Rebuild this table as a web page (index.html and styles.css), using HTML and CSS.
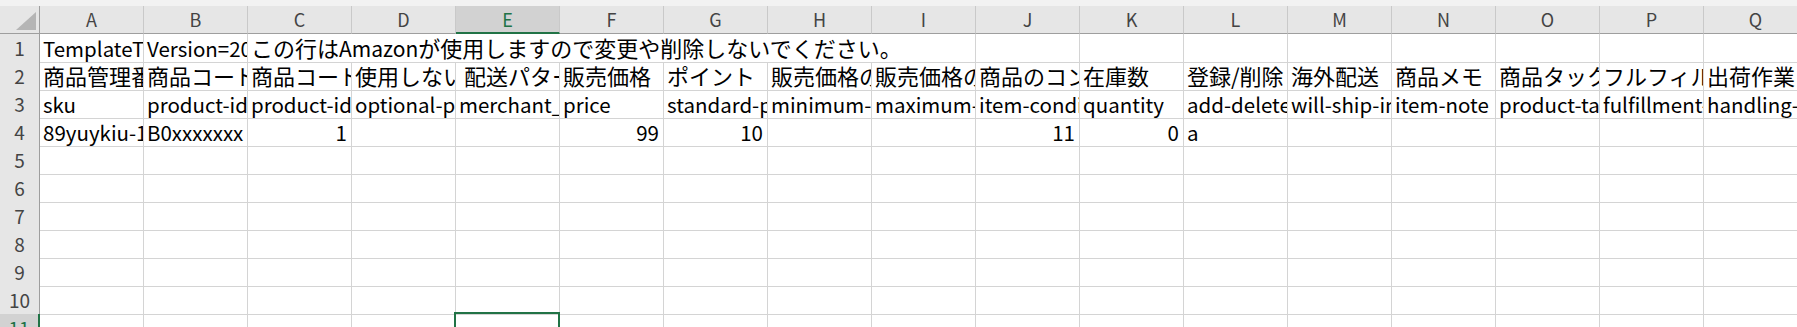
FILE: index.html
```html
<!DOCTYPE html>
<html lang="ja">
  <head>
    <meta charset="UTF-8" />
    <meta name="viewport" content="width=device-width, initial-scale=1.0" />
    <title>在庫ファイル</title>
    <link rel="stylesheet" href="styles.css">
  </head>
  <body>
    <div class="strip"></div>
    <div class="sheet">
      <!-- column letters -->
      <div class="row head">
        <div class="corner"><svg width="20" height="18" viewBox="0 0 20 18"><polygon points="20,0 20,18 0,18" fill="#b5b5b5"/></svg></div>
        <div class="col">A</div><div class="col">B</div><div class="col">C</div><div class="col">D</div>
        <div class="col sel">E</div><div class="col">F</div><div class="col">G</div><div class="col">H</div>
        <div class="col">I</div><div class="col">J</div><div class="col">K</div><div class="col">L</div>
        <div class="col">M</div><div class="col">N</div><div class="col">O</div><div class="col">P</div>
        <div class="col">Q</div>
      </div>

      <div class="row">
        <div class="rh">1</div>
        <div class="c">TemplateType=Offer</div>
        <div class="c">Version=2020.0909</div>
        <div class="c ja spill open">この行は<span class="en">Amazon</span>が使用しますので変更や削除しないでください。</div>
        <div class="c open"></div><div class="c open"></div><div class="c open"></div><div class="c open"></div><div class="c open"></div>
        <div class="c"></div><div class="c"></div><div class="c"></div><div class="c"></div><div class="c"></div>
        <div class="c"></div><div class="c"></div><div class="c"></div><div class="c"></div>
      </div>

      <div class="row">
        <div class="rh">2</div>
        <div class="c ja">商品管理番号</div>
        <div class="c ja">商品コード(JAN/EAN/UPC/ISBN/ASIN)</div>
        <div class="c ja">商品コードのタイプ</div>
        <div class="c ja">使用しない支払い方法</div>
        <div class="c ja"> 配送パターン</div>
        <div class="c ja">販売価格</div>
        <div class="c ja">ポイント</div>
        <div class="c ja">販売価格の下限設定</div>
        <div class="c ja">販売価格の上限設定</div>
        <div class="c ja">商品のコンディション</div>
        <div class="c ja">在庫数</div>
        <div class="c ja">登録/削除</div>
        <div class="c ja">海外配送</div>
        <div class="c ja">商品メモ</div>
        <div class="c ja">商品タックスコード</div>
        <div class="c ja">フルフィルメントチャネル</div>
        <div class="c ja">出荷作業日数</div>
      </div>

      <div class="row">
        <div class="rh">3</div>
        <div class="c">sku</div>
        <div class="c">product-id</div>
        <div class="c">product-id-type</div>
        <div class="c">optional-payment-type-exclusion</div>
        <div class="c">merchant_shipping_group_name</div>
        <div class="c">price</div>
        <div class="c">standard-price-points</div>
        <div class="c">minimum-seller-allowed-price</div>
        <div class="c">maximum-seller-allowed-price</div>
        <div class="c">item-condition</div>
        <div class="c">quantity</div>
        <div class="c">add-delete</div>
        <div class="c">will-ship-internationally</div>
        <div class="c">item-note</div>
        <div class="c">product-tax-code</div>
        <div class="c">fulfillment-center-id</div>
        <div class="c">handling-time</div>
      </div>

      <div class="row">
        <div class="rh">4</div>
        <div class="c">89yuykiu-1234</div>
        <div class="c">B0xxxxxxx</div>
        <div class="c num">1</div>
        <div class="c"></div>
        <div class="c"></div>
        <div class="c num">99</div>
        <div class="c num">10</div>
        <div class="c"></div>
        <div class="c"></div>
        <div class="c num">11</div>
        <div class="c num">0</div>
        <div class="c">a</div>
        <div class="c"></div><div class="c"></div><div class="c"></div><div class="c"></div><div class="c"></div>
      </div>

      <!-- empty rows -->
      <div class="row"><div class="rh">5</div><div class="c"></div><div class="c"></div><div class="c"></div><div class="c"></div><div class="c"></div><div class="c"></div><div class="c"></div><div class="c"></div><div class="c"></div><div class="c"></div><div class="c"></div><div class="c"></div><div class="c"></div><div class="c"></div><div class="c"></div><div class="c"></div><div class="c"></div></div>
      <div class="row"><div class="rh">6</div><div class="c"></div><div class="c"></div><div class="c"></div><div class="c"></div><div class="c"></div><div class="c"></div><div class="c"></div><div class="c"></div><div class="c"></div><div class="c"></div><div class="c"></div><div class="c"></div><div class="c"></div><div class="c"></div><div class="c"></div><div class="c"></div><div class="c"></div></div>
      <div class="row"><div class="rh">7</div><div class="c"></div><div class="c"></div><div class="c"></div><div class="c"></div><div class="c"></div><div class="c"></div><div class="c"></div><div class="c"></div><div class="c"></div><div class="c"></div><div class="c"></div><div class="c"></div><div class="c"></div><div class="c"></div><div class="c"></div><div class="c"></div><div class="c"></div></div>
      <div class="row"><div class="rh">8</div><div class="c"></div><div class="c"></div><div class="c"></div><div class="c"></div><div class="c"></div><div class="c"></div><div class="c"></div><div class="c"></div><div class="c"></div><div class="c"></div><div class="c"></div><div class="c"></div><div class="c"></div><div class="c"></div><div class="c"></div><div class="c"></div><div class="c"></div></div>
      <div class="row"><div class="rh">9</div><div class="c"></div><div class="c"></div><div class="c"></div><div class="c"></div><div class="c"></div><div class="c"></div><div class="c"></div><div class="c"></div><div class="c"></div><div class="c"></div><div class="c"></div><div class="c"></div><div class="c"></div><div class="c"></div><div class="c"></div><div class="c"></div><div class="c"></div></div>
      <div class="row"><div class="rh">10</div><div class="c"></div><div class="c"></div><div class="c"></div><div class="c"></div><div class="c"></div><div class="c"></div><div class="c"></div><div class="c"></div><div class="c"></div><div class="c"></div><div class="c"></div><div class="c"></div><div class="c"></div><div class="c"></div><div class="c"></div><div class="c"></div><div class="c"></div></div>
      <div class="row"><div class="rh on">11</div><div class="c"></div><div class="c"></div><div class="c"></div><div class="c"></div><div class="c active"></div><div class="c"></div><div class="c"></div><div class="c"></div><div class="c"></div><div class="c"></div><div class="c"></div><div class="c"></div><div class="c"></div><div class="c"></div><div class="c"></div><div class="c"></div><div class="c"></div></div>
    </div>
  </body>
</html>
```

FILE: styles.css
```css
body {
  margin: 0;
  overflow: hidden;
  background: #ffffff;
  font-family: "Noto Sans CJK JP", "Noto Sans", sans-serif;
}

.strip {
  height: 6px;
  background: #f2f2f2;
}

.row {
  display: grid;
  grid-template-columns: 40px repeat(17, 104px);
  height: 28px;
}

/* header row */
.corner {
  display: flex;
  justify-content: flex-end;
  align-items: flex-end;
  padding: 0 3px 3px 0;
  background: #e6e6e6;
  border-right: 1px solid #9e9e9e;
  border-bottom: 1px solid #9e9e9e;
}

.col {
  background: #e6e6e6;
  border-right: 1px solid #c9c9c9;
  border-bottom: 1px solid #9e9e9e;
  color: #444444;
  font-size: 18px;
  line-height: 27px;
  text-align: center;
}

.col.sel {
  background: #d2d2d2;
  color: #217346;
  border-bottom: 2px solid #217346;
  line-height: 26px;
}

/* row numbers */
.rh {
  background: #e6e6e6;
  border-right: 1px solid #9e9e9e;
  border-bottom: 1px solid #c9c9c9;
  color: #444444;
  font-size: 19px;
  line-height: 28px;
  text-align: center;
}

.rh.on {
  background: #d2d2d2;
  color: #217346;
  border-right: 2px solid #217346;
}

/* cells */
.c {
  position: relative;
  border-right: 1px solid #d4d4d4;
  border-bottom: 1px solid #d4d4d4;
  padding: 0 3px;
  overflow: hidden;
  white-space: pre;
  color: #000000;
  font-size: 20.5px;
  line-height: 28px;
}

/* kana and kanji run a little larger than the latin text */
.c.ja {
  font-size: 22px;
  line-height: 27px;
}

.c .en {
  font-size: 21px;
}

.c.num {
  text-align: right;
  padding-right: 4px;
}

.c.spill {
  overflow: visible;
}

.c.open {
  border-right-color: transparent;
}

.c.active {
  overflow: visible;
}

.c.active::after {
  content: "";
  position: absolute;
  top: -2px;
  left: -2px;
  right: -1px;
  bottom: -20px;
  border: 2px solid #217346;
}
```
